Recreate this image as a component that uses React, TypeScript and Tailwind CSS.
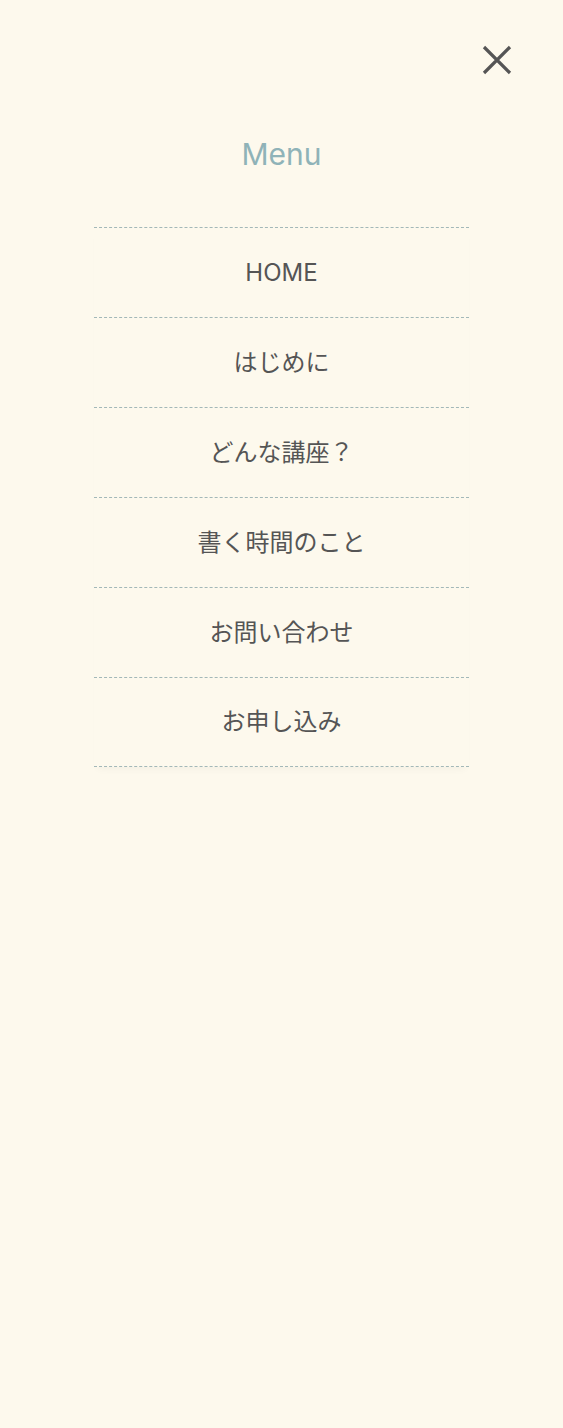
const items = ['HOME', 'はじめに', 'どんな講座？', '書く時間のこと', 'お問い合わせ', 'お申し込み'];

export default function App() {
  return (
    <div
      className="min-h-[1428px] w-full bg-[#fdf9ed] text-[#555555]"
      style={{ fontFamily: 'Inter, "Noto Sans CJK JP", sans-serif' }}
    >
      <div className="flex justify-end pt-[44px] pr-[50px]">
        <button aria-label="close" className="w-[32px] h-[32px]">
          <svg viewBox="0 0 32 32" className="w-[32px] h-[32px]">
            <path d="M3 3 L29 29 M29 3 L3 29" stroke="#555555" strokeWidth="3.2" strokeLinecap="butt" />
          </svg>
        </button>
      </div>

      <h2 className="mt-[56px] text-center text-[30px] leading-[45px] text-[#8fb3b8]">Menu</h2>

      <nav className="mx-auto mt-[50px] w-[375px] shadow-[0_6px_8px_-4px_rgba(0,0,0,0.04)]">
        <ul>
          {items.map((label, i) => (
            <li
              key={label}
              className={
                'flex h-[90px] items-center justify-center border-t border-dashed border-[#a3b8b8] text-[24px] ' +
                (i === items.length - 1 ? 'border-b' : '')
              }
            >
              {label}
            </li>
          ))}
        </ul>
      </nav>
    </div>
  );
}
